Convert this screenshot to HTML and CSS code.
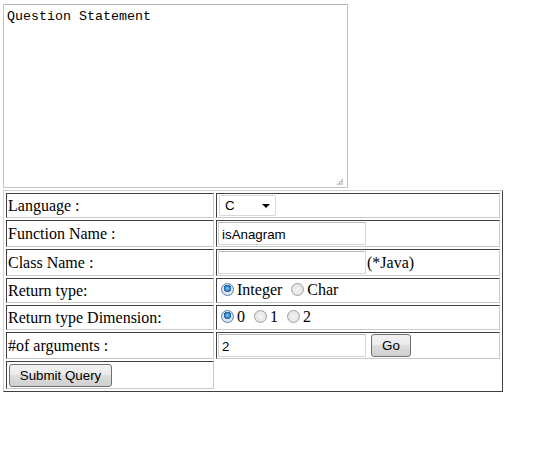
FILE: index.html
```html
<!DOCTYPE html>
<html>
<head>
<meta charset="utf-8">
<link rel="stylesheet" href="styles.css">
</head>
<body>
<form class="page">
  <div class="ta-wrap">
    <textarea class="question">Question Statement</textarea>
    <span class="grip"></span>
  </div>
  <table class="form-table">
    <tr>
      <td class="label">Language :</td>
      <td class="field">
        <span class="select-wrap"><select class="lang"><option>C</option><option>Java</option></select></span>
      </td>
    </tr>
    <tr>
      <td class="label">Function Name :</td>
      <td class="field"><input class="text" type="text" value="isAnagram"></td>
    </tr>
    <tr>
      <td class="label">Class Name :</td>
      <td class="field"><input class="text" type="text" value=""><span class="note">(*Java)</span></td>
    </tr>
    <tr>
      <td class="label">Return type:</td>
      <td class="field"><label class="radio"><input type="radio" name="rt" checked>Integer</label> <label class="radio"><input type="radio" name="rt">Char</label></td>
    </tr>
    <tr>
      <td class="label">Return type Dimension:</td>
      <td class="field"><label class="radio"><input type="radio" name="rd" checked>0</label> <label class="radio"><input type="radio" name="rd">1</label> <label class="radio"><input type="radio" name="rd">2</label></td>
    </tr>
    <tr>
      <td class="label">#of arguments :</td>
      <td class="field args"><input class="text" type="text" value="2"> <button type="button" class="btn go">Go</button></td>
    </tr>
    <tr>
      <td class="label submit-cell"><button type="button" class="btn submit">Submit Query</button></td>
      <td class="empty"></td>
    </tr>
  </table>
</form>
</body>
</html>
```

FILE: styles.css
```css
html, body {
  margin: 0;
  padding: 0;
  background: #fff;
}

.page {
  display: flex;
  flex-direction: column;
  align-items: flex-start;
  gap: 2px;
  padding: 4px 0 0 3px;
  font-family: "Liberation Serif", "Times New Roman", serif;
  font-size: 16px;
  color: #000;
}

.ta-wrap {
  position: relative;
  width: 345px;
  height: 184px;
}

.question {
  display: block;
  box-sizing: border-box;
  width: 345px;
  height: 184px;
  margin: 0;
  padding: 4px 3px 2px;
  border: 1px solid #c4c4c4;
  border-top-color: #b5b5b5;
  font-family: "Liberation Mono", "Courier New", monospace;
  font-size: 13.33px;
  line-height: 16px;
  color: #000;
  resize: none;
  outline: none;
}

.grip {
  position: absolute;
  right: 5px;
  bottom: 3px;
  width: 7px;
  height: 7px;
  background:
    radial-gradient(circle, #a8a8a8 0.8px, transparent 1px) 0 0 / 2.4px 2.4px;
  clip-path: polygon(100% 0, 100% 100%, 0 100%);
}

.form-table {
  width: 500px;
  border-collapse: separate;
  border-spacing: 2px;
  border: 1px solid;
  border-color: #d0d0d0 #404040 #404040 #d0d0d0;
}

.form-table td {
  padding: 1px;
  border: 1px solid;
  border-color: #404040 #c8c8c8 #c8c8c8 #404040;
  height: 21px;
  vertical-align: middle;
  white-space: nowrap;
}

.form-table td.label {
  width: 203px;
}

.form-table td.args {
  height: 23px;
}

.form-table td.submit-cell {
  height: 24px;
  padding: 1px 1px 1px 2px;
}

.form-table td.empty {
  border: none;
}

.select-wrap {
  position: relative;
  display: inline-block;
  vertical-align: middle;
}

.select-wrap::after {
  content: "";
  position: absolute;
  right: 6px;
  top: 9px;
  border-left: 4px solid transparent;
  border-right: 4px solid transparent;
  border-top: 4px solid #000;
  pointer-events: none;
}

.lang {
  -webkit-appearance: none;
  appearance: none;
  box-sizing: border-box;
  width: 57px;
  height: 21px;
  margin: 0 0 0 1px;
  padding: 0 0 0 5px;
  border: 1px solid #d7d7d7;
  border-radius: 2px;
  background: #fff;
  font-family: "Liberation Sans", Arial, sans-serif;
  font-size: 13.33px;
  color: #000;
}

.text {
  box-sizing: border-box;
  width: 148px;
  height: 23px;
  margin: 0;
  padding: 1px 3px 0;
  border: 1px solid #d5d5d5;
  border-top-color: #b9b9b9;
  font-family: "Liberation Sans", Arial, sans-serif;
  font-size: 13.33px;
  color: #000;
  vertical-align: middle;
  outline: none;
}

.note {
  vertical-align: middle;
  margin-left: 1px;
}

.radio {
  display: inline-flex;
  align-items: center;
}

.radio + .radio {
  margin-left: 2px;
}

.radio input {
  -webkit-appearance: none;
  appearance: none;
  width: 13px;
  height: 13px;
  margin: 0 3px 0 3px;
  border-radius: 50%;
  border: 1px solid #a0a0a0;
  background: radial-gradient(circle at 50% 50%, #f4f4f4 0, #dcdcdc 100%);
  box-sizing: border-box;
}

.radio input:checked {
  border-color: #5a7fa8;
  background:
    radial-gradient(circle at 50% 40%, #8fd0f4 0, #2c7cc6 2.5px, #1b5f9e 3.6px, transparent 3.8px),
    radial-gradient(circle, #e8eef4 0, #d4dde6 100%);
}

.btn {
  box-sizing: border-box;
  font-family: "Liberation Sans", Arial, sans-serif;
  font-size: 13.33px;
  color: #000;
  border: 1px solid #707070;
  border-radius: 3px;
  background: linear-gradient(#f2f2f2 0%, #ebebeb 45%, #dddddd 50%, #cfcfcf 100%);
  padding: 0 6px;
  vertical-align: middle;
}

.go {
  width: 40px;
  height: 23px;
  margin-left: 1px;
}

.submit {
  width: 103px;
  height: 23px;
  margin: 0;
}
```
